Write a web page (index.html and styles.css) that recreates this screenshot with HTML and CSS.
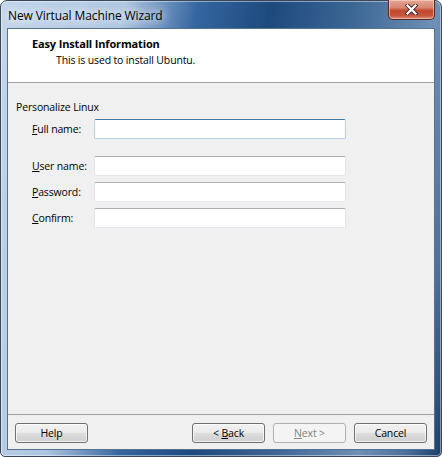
FILE: index.html
```html
<!DOCTYPE html>
<html>
<head>
	<title>New Virtual Machine Wizard</title>
	<link rel="stylesheet" href="styles.css">
</head>
<body>
<div class="window">
	<div class="titlebar">
		<span class="title">New Virtual Machine Wizard</span>
		<a href="javascript:;" class="close">
			<svg width="13" height="11" viewBox="0 0 13 11">
				<path d="M2.5 1.5l8 8M10.5 1.5l-8 8" stroke="#3b2a2a" stroke-width="4" stroke-linecap="square"/>
				<path d="M2.5 1.5l8 8M10.5 1.5l-8 8" stroke="#fff" stroke-width="2.2" stroke-linecap="square"/>
			</svg>
		</a>
	</div>
	<div class="client">
		<div class="header">
			<div class="header-title">Easy Install Information</div>
			<div class="header-sub">This is used to install Ubuntu.</div>
		</div>
		<div class="content">
			<div class="group-label">Personalize Linux</div>
			<div class="row row-first">
				<label><u>F</u>ull name:</label>
				<input type="text" class="field focused">
			</div>
			<div class="row">
				<label><u>U</u>ser name:</label>
				<input type="text" class="field">
			</div>
			<div class="row">
				<label><u>P</u>assword:</label>
				<input type="password" class="field">
			</div>
			<div class="row">
				<label><u>C</u>onfirm:</label>
				<input type="password" class="field">
			</div>
		</div>
		<div class="footer">
			<a href="javascript:;" class="btn"><span>Help</span></a>
			<div class="spacer"></div>
			<a href="javascript:;" class="btn"><span>&lt; <u>B</u>ack</span></a>
			<a href="javascript:;" class="btn disabled"><span><u>N</u>ext &gt;</span></a>
			<a href="javascript:;" class="btn"><span>Cancel</span></a>
		</div>
	</div>
</div>
</body>
</html>
```
FILE: styles.css
```css
*{margin: 0;padding: 0;box-sizing: border-box;text-decoration: none;}
body{background: #fff;font-family: "Open Sans", "Noto Sans", sans-serif;font-size: 10.5px;letter-spacing: -0.15px;color: #000;}
u{text-decoration: underline;}

.window{width: 442px;height: 457px;border: 1px solid #38475a;border-radius: 7px 7px 5px 5px;padding: 0 6px 6px;display: flex;flex-direction: column;
	background: linear-gradient(100deg, #c4d6ea 0%, #aec6e1 24%, #3566a0 38%, #1d4a7e 52%, #3c6694 68%, #6f90b7 84%, #4d719c 93%, #1b3f6b 100%);
	box-shadow: inset 0 0 0 1px rgba(255,255,255,.45);}

.titlebar{height: 27px;display: flex;align-items: flex-start;}
.title{flex: 1;padding: 6px 0 0 1px;font-size: 12px;letter-spacing: -0.1px;line-height: 17px;color: #000;
	text-shadow: 0 0 8px #fff, 0 0 12px rgba(255,255,255,.9);}
.close{width: 47px;height: 20px;margin-top: -1px;display: flex;align-items: center;justify-content: center;
	border: 1px solid #4f2a22;border-top: none;border-radius: 0 0 5px 5px;
	background: linear-gradient(#e7a898 0%, #d88670 40%, #c24a30 55%, #c5523a 80%, #de8a70 100%);
	box-shadow: inset 0 0 0 1px rgba(255,220,210,.55);}

.client{flex: 1;border: 1px solid #56708f;background: #f0f0f0;display: flex;flex-direction: column;}

.header{height: 54px;background: #fff;border-bottom: 1px solid #a0a0a0;padding: 7px 0 0 24px;}
.header-title{font-weight: bold;line-height: 15px;font-size: 11px;}
.header-sub{line-height: 15px;margin-top: 2px;padding-left: 24px;}

.content{flex: 1;padding: 17px 0 0 8px;}
.group-label{line-height: 15px;}
.row{display: flex;align-items: center;padding-left: 16px;margin-top: 6px;}
.row-first{margin-top: 4px;margin-bottom: 17px;}
.row label{width: 62px;line-height: 15px;}
.field{width: 252px;height: 20px;border: 1px solid #e2e3ea;border-top-color: #abadb3;border-bottom-color: #e3e9ef;border-radius: 2px;background: #fff;outline: none;}
.field.focused{border-color: #b5cfe7;border-top-color: #3d7bad;}

.footer{height: 35px;border-top: 1px solid #a0a0a0;padding: 8px 7px 0;display: flex;gap: 8px;}
.spacer{flex: 1;}
.btn{width: 73px;height: 20px;display: flex;align-items: center;justify-content: center;color: #000;
	border: 1px solid #707070;border-radius: 3px;
	background: linear-gradient(#f2f2f2 0%, #ebebeb 48%, #dddddd 52%, #cfcfcf 100%);
	box-shadow: inset 0 0 0 1px rgba(255,255,255,.7);}
.btn.disabled{color: #838383;border-color: #adb2b5;background: #f4f4f4;box-shadow: none;}
```
